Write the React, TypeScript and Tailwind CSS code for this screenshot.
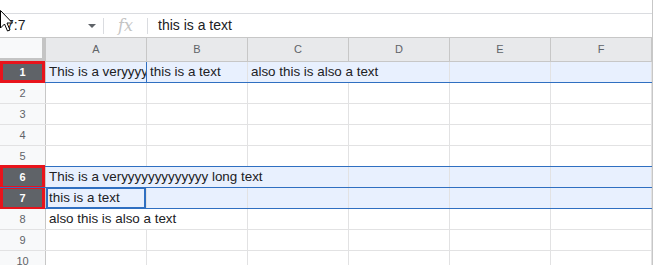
import React from 'react';

type Cell = { text?: string; span?: number; active?: boolean; blueRight?: boolean };
type Row = {
  n: number;
  cells: Cell[];
  selected?: boolean;
  tint?: boolean;
  blueBottom?: boolean;
  red?: 'single' | 'top' | 'bottom';
};

const COLS = ['A', 'B', 'C', 'D', 'E', 'F'];

const blank = (k: number): Cell[] => Array.from({ length: k }, () => ({}));

const ROWS: Row[] = [
  {
    n: 1,
    selected: true,
    tint: true,
    blueBottom: true,
    red: 'single',
    cells: [
      { text: 'This is a veryyyyyyyyyyyyy long text', blueRight: true },
      { text: 'this is a text' },
      { text: 'also this is also a text', span: 2 },
      ...blank(2),
    ],
  },
  { n: 2, cells: blank(6) },
  { n: 3, cells: blank(6) },
  { n: 4, cells: blank(6) },
  { n: 5, cells: blank(6), blueBottom: true },
  {
    n: 6,
    selected: true,
    tint: true,
    blueBottom: true,
    red: 'top',
    cells: [{ text: 'This is a veryyyyyyyyyyyyy long text', span: 3 }, ...blank(3)],
  },
  {
    n: 7,
    selected: true,
    tint: true,
    blueBottom: true,
    red: 'bottom',
    cells: [{ text: 'this is a text', active: true }, ...blank(5)],
  },
  { n: 8, cells: [{ text: 'also this is also a text', span: 2 }, ...blank(4)] },
  { n: 9, cells: blank(6) },
  { n: 10, cells: blank(6) },
];

function RowHeader({ row }: { row: Row }) {
  if (!row.selected) {
    return (
      <div className="w-[46px] shrink-0 border-r border-[#c7c7c7] bg-[#f8f9fa] flex items-center justify-center text-[11px] text-[#5f6368]">
        {row.n}
      </div>
    );
  }
  const frame =
    row.red === 'top'
      ? 'border-x-[3px] border-t-[3px] border-b-[1px] -mt-[2px]'
      : row.red === 'bottom'
        ? 'border-x-[3px] border-b-[3px] border-t-[1px] -mb-[2px]'
        : 'border-[3px] -my-[1px]';
  return (
    <div className="w-[46px] shrink-0 border-r border-[#c7c7c7] bg-[#f8f9fa] flex">
      <div
        className={`w-[45px] ${frame} border-[#e8141c] bg-[#5f6368] flex items-center justify-center text-[11px] font-bold text-white`}
      >
        {row.n}
      </div>
    </div>
  );
}

function SheetRow({ row }: { row: Row }) {
  return (
    <div
      className={`flex h-[21px] border-b ${row.blueBottom ? 'border-[#2f6fc1]' : 'border-[#e2e2e3]'}`}
    >
      <RowHeader row={row} />
      {row.cells.map((c, i) => {
        const span = c.span ?? 1;
        return (
          <div
            key={i}
            style={{ width: 101 * span }}
            className={`relative shrink-0 border-r ${c.blueRight ? 'border-[#2f6fc1]' : 'border-[#e2e2e3]'} ${row.tint ? 'bg-[#e8f0fe]' : 'bg-white'} overflow-hidden whitespace-nowrap pl-[3px] text-[13.4px] leading-[20px] text-[#202124]`}
          >
            {c.text}
            {c.active && (
              <div className="absolute inset-x-0 top-[-1px] bottom-[-1px] border-2 border-[#2f6fc1]" />
            )}
          </div>
        );
      })}
    </div>
  );
}

function Cursor() {
  return (
    <svg className="absolute left-0 top-[10px]" width="16" height="24" viewBox="0 0 16 24">
      <path
        d="M0.5 0.5 L0.5 18 L4.5 14 L7.5 21 L10 20 L7 13 L12.5 13 Z"
        fill="white"
        stroke="black"
        strokeWidth="1"
        strokeLinejoin="round"
      />
    </svg>
  );
}

export default function App() {
  return (
    <div className="relative w-[653px] h-[265px] overflow-hidden bg-white font-['Liberation_Sans',Arial,sans-serif] border-r border-[#c7c7c7]">
      <div className="h-[14px] border-b border-[#dadce0]" />

      {/* Formula bar */}
      <div className="flex h-[24px] items-center border-b border-[#c7c7c7] text-[14px] text-[#202124]">
        <div className="w-[103px] flex items-center justify-between pl-[6px] pr-[7px]">
          <span>7:7</span>
          <span className="w-0 h-0 border-x-[4px] border-x-transparent border-t-[4px] border-t-[#5f6368]" />
        </div>
        <div className="h-[16px] w-px bg-[#dadce0]" />
        <div className="w-[43px] text-center font-['DejaVu_Serif',serif] italic text-[16px] text-[#c4c4c4] leading-none">
          fx
        </div>
        <div className="h-[16px] w-px bg-[#dadce0]" />
        <div className="pl-[10px]">this is a text</div>
      </div>

      {/* Column header */}
      <div className="flex h-[24px] border-b border-[#c7c7c7]">
        <div className="w-[46px] shrink-0 bg-[#f8f9fa] border-r-[4px] border-b-[3px] border-[#c4c4c4]" />
        {COLS.map((c) => (
          <div
            key={c}
            className="w-[101px] shrink-0 border-r border-[#c7c7c7] bg-[#e8e9eb] flex items-center justify-center text-[11px] text-[#5f6368]"
          >
            {c}
          </div>
        ))}
      </div>

      {ROWS.map((r) => (
        <SheetRow key={r.n} row={r} />
      ))}

      <Cursor />
    </div>
  );
}
